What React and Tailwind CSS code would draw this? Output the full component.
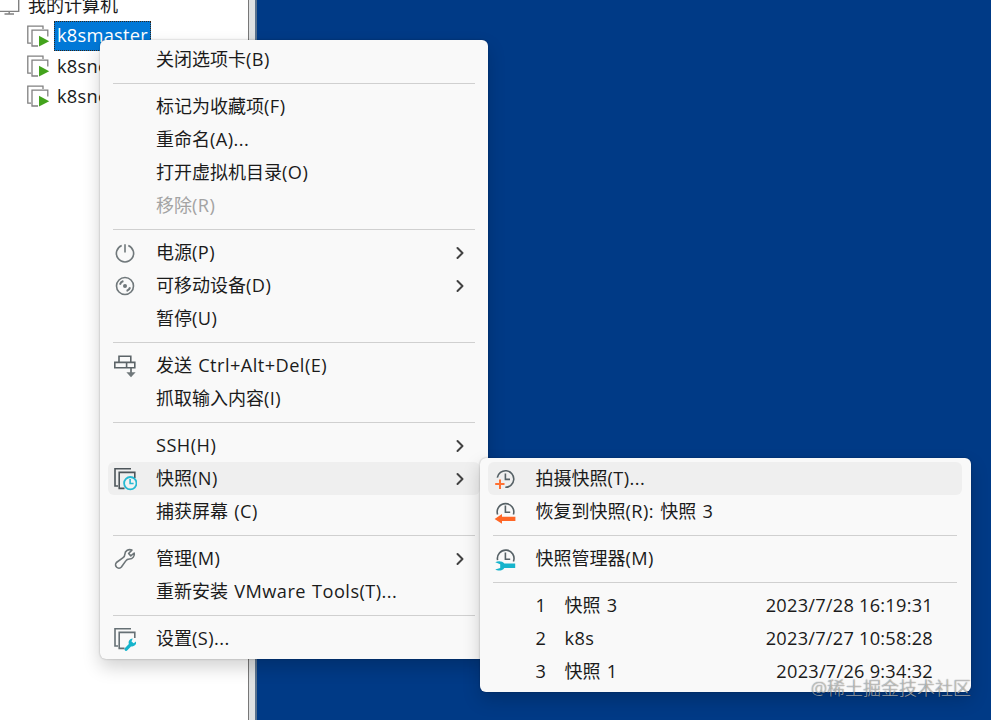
import { ChevronRight } from 'lucide-react';

const font = "font-['Open_Sans','Noto_Sans_CJK_SC',sans-serif]";

// Latin runs get slightly wider spacing than the Chinese ones
function Label({ text, latin = 'tracking-[0.45px] [word-spacing:1px]' }) {
  return text.split(/([\x20-\x7e]+)/).filter(Boolean).map((part, i) =>
    /[\x20-\x7e]/.test(part)
      ? <span key={i} className={`text-[18.2px] whitespace-pre ${latin}`}>{part}</span>
      : <span key={i}>{part}</span>
  );
}

function PowerIcon() {
  return (
    <svg width="24" height="24" viewBox="0 0 24 24" fill="none" stroke="#70787b" strokeWidth="1.6">
      <path d="M8.7 4.4A8.6 8.6 0 1 0 15.3 4.4M12 3.2V11.5" />
    </svg>
  );
}

function DiscIcon() {
  return (
    <svg width="24" height="24" viewBox="0 0 24 24" fill="none" stroke="#70787b" strokeWidth="1.6">
      <circle cx="12" cy="12" r="8.5" />
      <circle cx="12" cy="12" r="2" fill="#70787b" stroke="none" />
      <path d="M6.9 10.6A5.4 5.4 0 0 1 10.4 7M17.1 13.4A5.4 5.4 0 0 1 13.6 17" strokeWidth="2" />
    </svg>
  );
}

function SendKeysIcon() {
  return (
    <svg width="24" height="24" viewBox="0 0 24 24" fill="none" stroke="#5c6468" strokeWidth="1.6">
      <path d="M6 8.2V2.2H17.8V8.2M1.8 8.4H21.8V13.8H1.8ZM13.6 8.4V13.8M18 14V21.5" />
      <path d="M13.4 18.2H22.6L18 23.2Z" fill="#70787b" stroke="none" />
    </svg>
  );
}

function StackPaths({ stroke = '#667075' }) {
  return (
    <g stroke={stroke} strokeWidth="1.6" fill="none">
      <path d="M18 1.8H2V19H5" />
      <path d="M21.8 11V5.4H6.2V21.4H11.5" />
    </g>
  );
}

function SnapshotIcon() {
  return (
    <svg width="24" height="24" viewBox="0 0 24 24" fill="none">
      <StackPaths stroke="#4d555a" />
      <circle cx="17.3" cy="16.2" r="6.2" fill="#f1f3f3" stroke="#25b9d2" strokeWidth="1.8" />
      <path d="M17.1 12V16.5H20.6" stroke="#25b9d2" strokeWidth="1.6" />
    </svg>
  );
}

function SettingsIcon() {
  return (
    <svg width="24" height="24" viewBox="0 0 24 24" fill="none">
      <StackPaths />
      <path d="M13.2 22.2L18 17.2" stroke="#16b4cc" strokeWidth="3.3" strokeLinecap="round" />
      <path d="M19.7 11.6A4 4 0 0 0 15.8 17L18 19.3A4 4 0 0 0 23 14.5L20.7 16.3L18.5 14.5Z" fill="#16b4cc" />
    </svg>
  );
}

function WrenchIcon() {
  return (
    <svg width="24" height="24" viewBox="0 0 24 24" fill="none" stroke="#6d7578" strokeWidth="1.6" strokeLinejoin="round">
      <path d="M18.9 3.1L15.6 6.5L17.8 8.9L21.2 6C22 9 19.6 12 16.6 12C14.9 11.9 13.7 12.5 12.8 13.9L8.4 20A3.3 3.3 0 0 1 3.4 15.5L9.8 10.9C11.1 10 11.8 9.1 11.8 7.4C11.9 3.6 15.8 1.7 18.9 3.1Z" />
    </svg>
  );
}

function TakeIcon() {
  return (
    <svg width="24" height="24" viewBox="0 0 24 24" fill="none" strokeWidth="1.6">
      <path d="M4.3 10.7A8.3 8.3 0 1 1 12.3 20.3M12.4 6.5V12.4H17" stroke="#566166" />
      <path d="M2.2 17H11.5M7 12.4V22" stroke="#ff7133" strokeWidth="2" />
    </svg>
  );
}

function RevertIcon() {
  return (
    <svg width="24" height="24" viewBox="0 0 24 24" fill="none">
      <path d="M4.6 14.5A8.3 8.3 0 1 1 20.4 14.5M12.4 5.5V12.2H17.2" stroke="#566166" strokeWidth="1.6" />
      <path d="M1.6 18.9L9 14V16.7H22.4V21.1H9V23.8Z" fill="#ff6626" />
    </svg>
  );
}

function ManagerIcon() {
  return (
    <svg width="24" height="24" viewBox="0 0 24 24" fill="none">
      <path d="M4.6 13.2A8.3 8.3 0 1 1 20.4 14.5M12.4 5.5V12.2H17.2" stroke="#566166" strokeWidth="1.6" />
      <path d="M2.3 15.3C5 13.5 9.4 13.8 11.3 16.6H22.2V20.9H11.3C9.3 24.2 4.6 24 2.3 22.4L7.2 21V17.2Z" fill="#16b4cc" />
    </svg>
  );
}

function MachineIcon() {
  return (
    <svg width="24" height="24" viewBox="0 0 24 24" fill="none" className="shrink-0">
      <g stroke="#808080" strokeWidth="1.3">
        <path d="M17 5V2.2H1.8V19.2H5" />
        <path d="M21.8 12.5V6.2H6V22H12" />
      </g>
      <path d="M13 11.8L23.2 17.3L13 22.5Z" fill="#43a31d" />
    </svg>
  );
}

const menu = [
  { label: '关闭选项卡(B)' },
  null,
  { label: '标记为收藏项(F)' },
  { label: '重命名(A)...' },
  { label: '打开虚拟机目录(O)' },
  { label: '移除(R)', disabled: true },
  null,
  { label: '电源(P)', icon: PowerIcon, sub: true },
  { label: '可移动设备(D)', icon: DiscIcon, sub: true },
  { label: '暂停(U)' },
  null,
  { label: '发送 Ctrl+Alt+Del(E)', icon: SendKeysIcon },
  { label: '抓取输入内容(I)' },
  null,
  { label: 'SSH(H)', sub: true },
  { label: '快照(N)', icon: SnapshotIcon, sub: true, active: true },
  { label: '捕获屏幕 (C)' },
  null,
  { label: '管理(M)', icon: WrenchIcon, sub: true },
  { label: '重新安装 VMware Tools(T)...' },
  null,
  { label: '设置(S)...', icon: SettingsIcon },
];

const snapshotMenu = [
  { label: '拍摄快照(T)...', icon: TakeIcon, active: true },
  { label: '恢复到快照(R): 快照 3', icon: RevertIcon },
  null,
  { label: '快照管理器(M)', icon: ManagerIcon },
  null,
  { index: 1, label: '快照 3', time: '2023/7/28 16:19:31' },
  { index: 2, label: 'k8s', time: '2023/7/27 10:58:28' },
  { index: 3, label: '快照 1', time: '2023/7/26 9:34:32' },
];

function Separator() {
  return (
    <div className="h-[13.8px] pt-[6.5px] px-[5px]">
      <div className="h-px bg-[#d0d0d0]" />
    </div>
  );
}

function MenuItem({ item }) {
  const Icon = item.icon;
  return (
    <div className={`flex items-center h-[33.1px] pl-[5px] rounded-md ${item.active ? 'bg-[#efefef]' : ''} ${item.disabled ? 'text-[#a3a3a3]' : 'text-[#1b1b1b]'}`}>
      <div className="w-[43px] shrink-0">{Icon && <Icon />}</div>
      {item.index && <div className="w-[29px] pb-[1.6px]"><Label text={String(item.index)} /></div>}
      <div className="pb-[1.6px] whitespace-nowrap"><Label text={item.label} /></div>
      {item.time && (
        <div className="ml-auto pr-[29px] pb-[1.6px] whitespace-nowrap">
          <Label text={item.time} latin="tracking-[0.25px]" />
        </div>
      )}
      {item.sub && <ChevronRight size={20} strokeWidth={2.4} className="ml-auto mr-[10px] text-[#424242]" />}
    </div>
  );
}

function Menu({ items, className }) {
  return (
    <div className={`absolute bg-[#f9f9f9] rounded-md shadow-[0_8px_18px_rgba(0,0,0,0.18),0_0_2px_rgba(0,0,0,0.3)] ${className}`}>
      {items.map((item, i) => item ? <MenuItem key={i} item={item} /> : <Separator key={i} />)}
    </div>
  );
}

function Machine({ name, selected }) {
  return (
    <div className="flex items-center h-[30.3px] pl-[26px]">
      <MachineIcon />
      <div className={`ml-[4px] h-[30px] px-[3px] flex items-center leading-none text-[18.3px] tracking-[0.25px] ${selected ? 'bg-[#0078d7] text-white outline-dotted outline-1 -outline-offset-1 outline-[#33261a]' : 'text-[#1b1b1b]'}`}>
        {name}
      </div>
    </div>
  );
}

export default function App() {
  return (
    <div className={`relative w-[991px] h-[720px] overflow-hidden flex text-[18px] leading-[24px] ${font}`}>
      <aside className="w-[248px] shrink-0 bg-white overflow-hidden">
        <div className="h-[20.5px] flex items-center pb-[10px]">
          <svg width="22" height="20" viewBox="0 0 22 20" fill="none" stroke="#808080" strokeWidth="1.4" className="shrink-0">
            <path d="M0 16.4H18.7V0M9.2 16.5V19M4.5 19H14" />
          </svg>
          <span className="ml-[6px] text-[#1b1b1b]">我的计算机</span>
        </div>
        <Machine name="k8smaster" selected />
        <Machine name="k8snode1" />
        <Machine name="k8snode2" />
      </aside>
      <div className="w-[9px] shrink-0 bg-[#dfe1e2] border-l border-r-2 border-l-[#777] border-r-[#59718d]" />
      <main className="flex-1 bg-[#003a86]" />

      <Menu items={menu} className="left-[100px] top-[40px] w-[388px] h-[619px] px-2 pt-[3px]" />
      <Menu items={snapshotMenu} className="left-[480px] top-[458px] w-[491px] h-[234px] pl-[7.5px] pr-[9px] pt-[4px]" />

      <div className="absolute right-[20px] bottom-[20px] text-[18px] leading-[24px] font-light text-white/60 [text-shadow:0_0_1px_#000c] whitespace-nowrap">@稀土掘金技术社区</div>
    </div>
  );
}
